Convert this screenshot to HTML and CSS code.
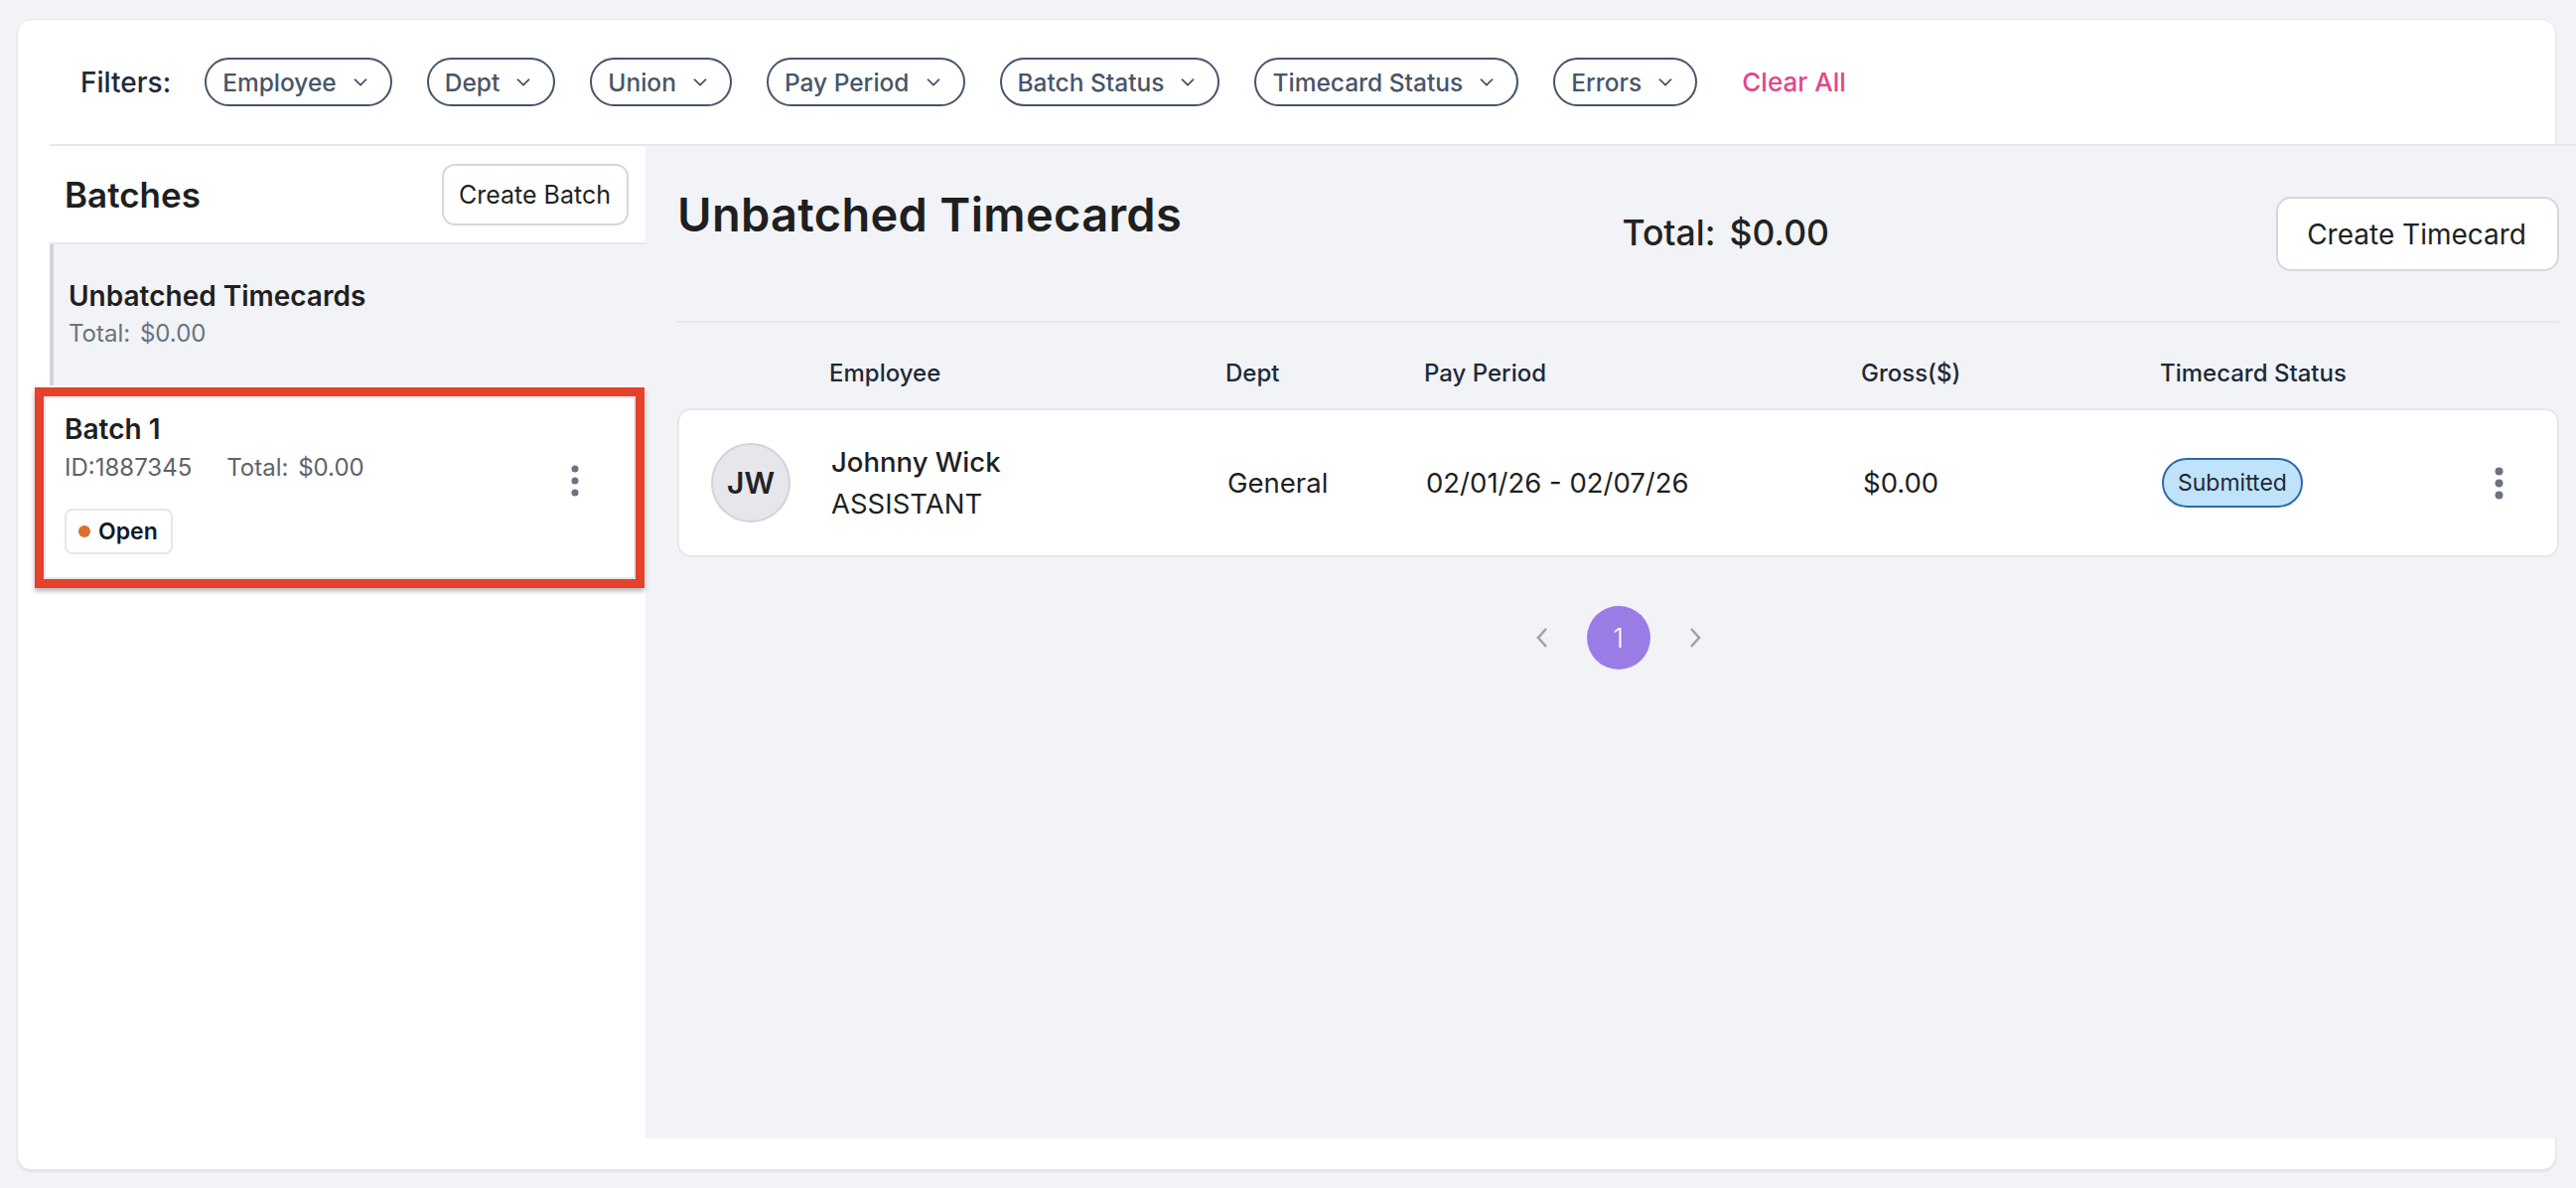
FILE: index.html
```html
<!DOCTYPE html>
<html lang="en">
<head>
<meta charset="utf-8">
<title>Timecards</title>
<link rel="stylesheet" href="styles.css">
</head>
<body>
<div class="card">
  <div class="inner">
    <div class="filters">
      <span class="filters-label">Filters:</span>
      <button class="pill">Employee <svg viewBox="0 0 14 8"><path d="M1.5 1.2 7 6.7l5.5-5.5"/></svg></button>
      <button class="pill">Dept <svg viewBox="0 0 14 8"><path d="M1.5 1.2 7 6.7l5.5-5.5"/></svg></button>
      <button class="pill">Union <svg viewBox="0 0 14 8"><path d="M1.5 1.2 7 6.7l5.5-5.5"/></svg></button>
      <button class="pill">Pay Period <svg viewBox="0 0 14 8"><path d="M1.5 1.2 7 6.7l5.5-5.5"/></svg></button>
      <button class="pill">Batch Status <svg viewBox="0 0 14 8"><path d="M1.5 1.2 7 6.7l5.5-5.5"/></svg></button>
      <button class="pill">Timecard Status <svg viewBox="0 0 14 8"><path d="M1.5 1.2 7 6.7l5.5-5.5"/></svg></button>
      <button class="pill">Errors <svg viewBox="0 0 14 8"><path d="M1.5 1.2 7 6.7l5.5-5.5"/></svg></button>
      <button class="clear">Clear All</button>
    </div>

    <div class="body">
      <aside class="sidebar">
        <div class="side-head">
          <h2>Batches</h2>
          <button class="btn">Create Batch</button>
        </div>

        <div class="batch-item active">
          <div class="batch-title">Unbatched Timecards</div>
          <div class="batch-meta">Total: $0.00</div>
        </div>

        <div class="batch-item batch">
          <div class="batch-info">
            <div class="batch-title">Batch 1</div>
            <div class="batch-meta ids"><span>ID:1887345</span><span>Total: $0.00</span></div>
            <span class="badge-open"><span class="dot"></span>Open</span>
          </div>
          <svg class="kebab kebab-sm" viewBox="0 0 8 32"><circle cx="4" cy="4" r="3.5"/><circle cx="4" cy="16" r="3.5"/><circle cx="4" cy="28" r="3.5"/></svg>
          <span class="frame"></span>
        </div>
      </aside>

      <main class="main">
        <div class="main-head">
          <h1>Unbatched Timecards</h1>
          <div class="head-right">
            <div class="grand-total"><span>Total:</span><span>$0.00</span></div>
            <button class="btn btn-lg">Create Timecard</button>
          </div>
        </div>

        <div class="grid table-head">
          <span></span>
          <span>Employee</span>
          <span>Dept</span>
          <span>Pay Period</span>
          <span>Gross($)</span>
          <span>Timecard Status</span>
          <span></span>
        </div>

        <div class="grid tc-row">
          <div class="avatar">JW</div>
          <div class="emp">
            <div class="emp-name">Johnny Wick</div>
            <div>ASSISTANT</div>
          </div>
          <div>General</div>
          <div>02/01/26 - 02/07/26</div>
          <div>$0.00</div>
          <div><span class="status">Submitted</span></div>
          <svg class="kebab" viewBox="0 0 9 33"><circle cx="4.5" cy="4.5" r="4"/><circle cx="4.5" cy="16.5" r="4"/><circle cx="4.5" cy="28.5" r="4"/></svg>
        </div>

        <nav class="pager">
          <svg class="chev" viewBox="0 0 14 22"><path d="M11 2 3 11l8 9"/></svg>
          <span class="page">1</span>
          <svg class="chev" viewBox="0 0 14 22"><path d="M3 2l8 9-8 9"/></svg>
        </nav>
      </main>
    </div>
  </div>
</div>
</body>
</html>
```

FILE: styles.css
```css
* { box-sizing: border-box; }

html, body { margin: 0; }

body {
  background: #f2f3f7;
  font-family: Inter, "Noto Sans", sans-serif;
  color: #1f1f1f;
  padding: 19px 20px 18px 17px;
}

button { font-family: inherit; cursor: pointer; }

/* outer white panel */
.card {
  background: #fff;
  border: 1px solid #e3e5ea;
  border-radius: 14px;
  padding: 0 0 31px 32px;
  box-shadow: 0 2px 2px rgba(0, 0, 0, 0.06);
}

.inner { margin-right: -21px; }

/* filter bar */
.filters {
  display: flex;
  align-items: center;
  gap: 35px;
  padding: 38px 0 38px 31px;
  border-bottom: 2px solid #e5e7eb;
}

.filters-label {
  font-size: 28px;
  font-weight: 500;
  color: #1f2937;
  margin-right: -1px;
}

.pill {
  display: inline-flex;
  align-items: center;
  gap: 17px;
  height: 49px;
  padding: 0 23px 0 16px;
  border: 2px solid #475569;
  border-radius: 999px;
  background: #fff;
  font-size: 24.5px;
  font-weight: 500;
  color: #475569;
}

.pill svg {
  width: 14px;
  height: 8px;
  fill: none;
  stroke: #475569;
  stroke-width: 1.8;
  stroke-linecap: round;
  stroke-linejoin: round;
}

.clear {
  margin-left: 10px;
  padding: 0;
  border: 0;
  background: none;
  font-size: 26px;
  font-weight: 500;
  color: #e0468d;
}

/* two-column body */
.body {
  display: flex;
  height: 999px;
}

.sidebar {
  width: 600px;
  flex: none;
  background: #fff;
}

.side-head {
  height: 99px;
  display: flex;
  align-items: center;
  justify-content: space-between;
  padding: 0 17px 0 15px;
  border-bottom: 2px solid #e5e7eb;
}

.side-head h2 {
  margin: 0;
  font-size: 35px;
  font-weight: 600;
  color: #1f1f1f;
}

.btn {
  height: 62px;
  padding: 0 16px 0 15px;
  background: #fff;
  border: 2px solid #d4d7dd;
  border-radius: 13px;
  font-size: 25px;
  color: #1f1f1f;
}

.batch-item { padding: 36px 17px 38px 15px; }

.batch-item.active {
  background: #f2f3f7;
  border-left: 4px solid #d1d5db;
}

.batch-title {
  font-size: 28px;
  font-weight: 600;
  line-height: 33px;
  color: #1f1f1f;
}

.batch-meta {
  margin-top: 7px;
  font-size: 24px;
  line-height: 28px;
  color: #6b7280;
  word-spacing: 3px;
}

.batch {
  position: relative;
  display: flex;
  align-items: center;
  justify-content: space-between;
  padding: 28px 17px 32px 15px;
  background: #fff;
}

.batch .batch-meta { margin-top: 8px; color: #5f6368; }

.ids { display: flex; gap: 35px; }

.badge-open {
  display: inline-flex;
  align-items: center;
  gap: 8px;
  height: 46px;
  margin-top: 27px;
  padding: 0 13px 0 12px;
  border: 2px solid #e5e7eb;
  border-radius: 8px;
  font-size: 23px;
  font-weight: 600;
  color: #111827;
}

.dot {
  width: 12px;
  height: 12px;
  border-radius: 50%;
  background: #d9722c;
}

.kebab { fill: #6b7280; }

.kebab-sm {
  width: 8px;
  height: 32px;
  margin-right: 50px;
  margin-top: -6px;
}

.frame {
  position: absolute;
  top: 2px;
  bottom: -2px;
  left: -15px;
  right: 1px;
  border: 9px solid #e6412b;
  box-shadow: 0 3px 5px rgba(0, 0, 0, 0.3), inset 0 0 0 2px #e5e7eb;
  pointer-events: none;
}

/* main pane */
.main {
  flex: 1;
  background: #f2f3f7;
  padding: 42px 17px 0 32px;
}

.main-head {
  display: grid;
  grid-template-columns: 1fr 1fr;
  align-items: start;
  padding-bottom: 50px;
  border-bottom: 2px solid #e5e7eb;
}

.main-head h1 {
  margin: 0;
  font-size: 47px;
  font-weight: 600;
  line-height: 54px;
  letter-spacing: 0.3px;
  color: #1f1f1f;
}

.head-right {
  display: flex;
  justify-content: space-between;
  align-items: flex-start;
}

.grand-total {
  display: flex;
  gap: 14px;
  margin-top: 25px;
  margin-left: 4px;
  font-size: 35.5px;
  font-weight: 450;
  line-height: 42px;
  color: #222;
}

.btn-lg {
  margin-top: 9px;
  height: 75px;
  padding: 0 31px 0 29px;
  border-radius: 15px;
  font-size: 28px;
}

.grid {
  display: grid;
  grid-template-columns: 153px 399px 200px 440px 301px 1fr 60px;
  align-items: center;
  padding-right: 29px;
}

.table-head {
  padding-top: 36px;
  padding-bottom: 21px;
  font-size: 24px;
  font-weight: 500;
  line-height: 29px;
  color: #1f2937;
}

.tc-row {
  height: 150px;
  background: #fff;
  border: 2px solid #e5e7eb;
  border-radius: 14px;
  font-size: 27.5px;
  color: #1f1f1f;
}

.avatar {
  width: 80px;
  height: 80px;
  margin-left: 32px;
  border-radius: 50%;
  background: #e5e7eb;
  border: 2px solid #d1d5db;
  display: flex;
  align-items: center;
  justify-content: center;
  font-size: 30px;
  font-weight: 600;
  color: #222;
}

.emp { line-height: 42px; }

.emp-name { font-weight: 500; }

.status {
  display: inline-flex;
  align-items: center;
  height: 50px;
  padding: 0 14px;
  border: 2px solid #2f6aa7;
  border-radius: 25px;
  background: #bfe3fb;
  font-size: 23px;
  color: #1f2937;
}

.tc-row .kebab {
  width: 9px;
  height: 33px;
  justify-self: center;
}

/* pagination */
.pager {
  display: flex;
  justify-content: center;
  align-items: center;
  gap: 38px;
  margin-top: 49px;
}

.chev {
  width: 14px;
  height: 22px;
  fill: none;
  stroke: #9ca3af;
  stroke-width: 2.6;
}

.page {
  width: 64px;
  height: 64px;
  border-radius: 50%;
  background: #9b7ce7;
  color: #fff;
  display: flex;
  align-items: center;
  justify-content: center;
  font-size: 27px;
  font-weight: 300;
}
```
